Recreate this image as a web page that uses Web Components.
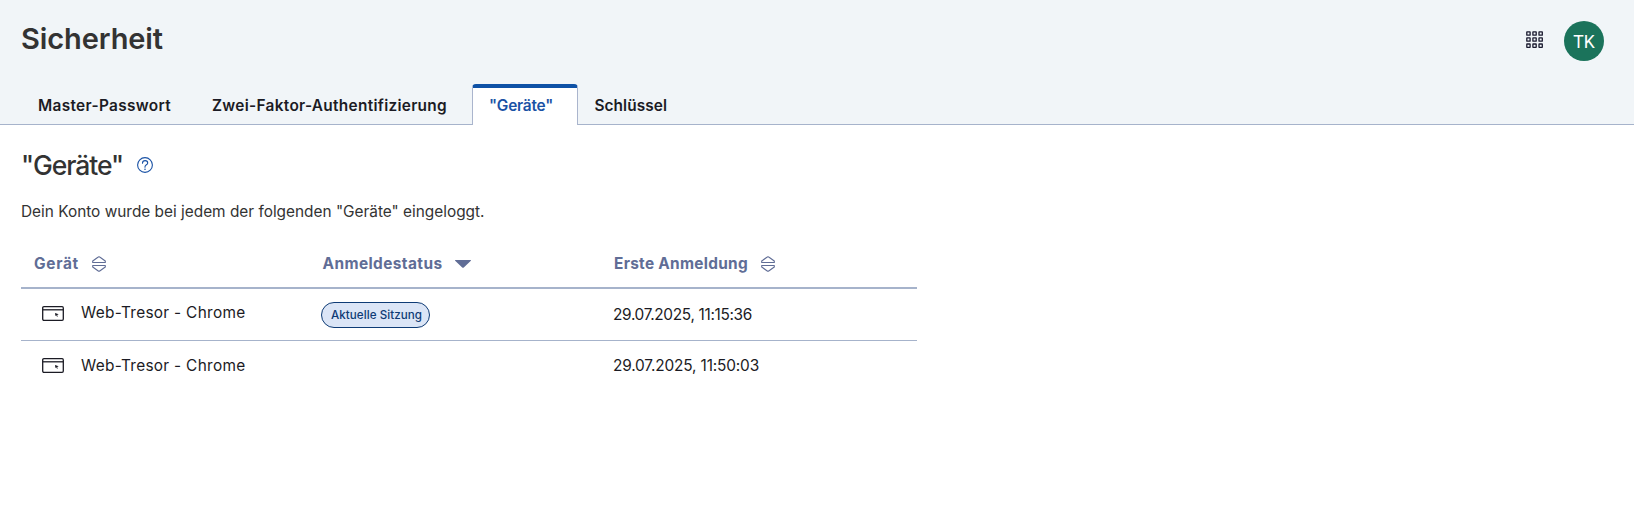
<!DOCTYPE html>
<html lang="de"><head><meta charset="utf-8"><title>Sicherheit</title>
<style>html,body{margin:0;background:#fff;font-family:Inter,"Liberation Sans",sans-serif;color:#1b1b24}</style></head>
<body><security-page></security-page>
<script>
// Single line of text, tracked so that it spans the given width.
class TextRun extends HTMLElement{
  connectedCallback(){
    const root=this.attachShadow({mode:'open'});
    root.innerHTML='<style>:host{display:block;white-space:nowrap;flex:none}span{display:inline-block}</style><span><slot></slot></span>';
    const w=+this.getAttribute('width'),s=root.querySelector('span');
    this.style.width=w+'px';
    s.style.letterSpacing=((w-s.getBoundingClientRect().width)/this.textContent.length)+'px';
  }
}
customElements.define('text-run',TextRun);

const icons={
 grid:['0 0 17 17',17,17,'<g fill="none" stroke="#1b1b30" stroke-width="1.3">'+[0,1,2].map(r=>[0,1,2].map(c=>`<rect x="${.8+c*6.1}" y="${.8+r*6.1}" width="3.3" height="3.3" rx=".2"/>`).join('')).join('')+'</g>'],
 help:['0 0 16 16',16,16,'<g fill="none" stroke="currentColor" stroke-width="1.1"><circle cx="8" cy="8" r="7.4"/><path d="M5.5 6.2C5.5 4.6 6.6 3.6 8.1 3.6S10.7 4.6 10.7 5.9C10.7 7.8 8 7.7 8 9.8V10.3" stroke-linecap="round"/></g><circle cx="8" cy="12.2" r=".8" fill="currentColor"/>'],
 sort:['0 0 14 16',14,16,'<path fill="none" stroke="currentColor" stroke-width="1.1" stroke-linejoin="round" d="M.7 6.5V5L6.3 1Q7 .4 7.7 1L13.3 5V6.5ZM.7 9.5H13.3V11L7.7 15Q7 15.6 6.3 15L.7 11Z"/>'],
 down:['0 0 16 8',16,8,'<path fill="currentColor" d="M.3 0H15.7Q16.3.5 15.6 1L8.8 7.4Q8 8.1 7.2 7.4L.4 1Q-.3.5.3 0Z"/>'],
 browser:['0 0 22 15',22,15,'<g fill="none" stroke="currentColor" stroke-width="1.3"><rect x=".7" y=".7" width="20.6" height="13.6" rx="1.2"/><path d="M.7 3.8H21.3"/></g><path fill="currentColor" d="M13 7L16.7 8.3L15.1 8.9L15.8 10.4L15 10.7L14.3 9.3L13.4 10.1Z"/>']
};
class UiIcon extends HTMLElement{
  connectedCallback(){
    const [box,w,h,art]=icons[this.getAttribute('name')];
    this.attachShadow({mode:'open'}).innerHTML=`<style>:host{display:block;flex:none;width:${w}px;height:${h}px}svg{display:block}</style><svg viewBox="${box}" width="${w}" height="${h}">${art}</svg>`;
  }
}
customElements.define('ui-icon',UiIcon);

class NavTab extends HTMLElement{
  connectedCallback(){
    this.attachShadow({mode:'open'}).innerHTML=`<style>
    :host{display:block;box-sizing:border-box;height:40px;padding:12px 17px 0;font-size:15.4px;line-height:20px;font-weight:600;color:#1b1b24}
    :host([active]){height:41px;margin-bottom:-1px;background:#fff;border:1px solid #aab5cd;border-top:4px solid #0f52a6;border-bottom:0;border-radius:4px 4px 0 0;padding:8px 16px 0;color:#1a52a5}
    </style><slot></slot>`;
  }
}
customElements.define('nav-tab',NavTab);

class UserAvatar extends HTMLElement{
  connectedCallback(){
    this.attachShadow({mode:'open'}).innerHTML='<style>:host{display:grid;place-items:center;width:40px;height:40px;border-radius:50%;background:#1b735b;color:#fff;font:17.5px/40px Roboto,sans-serif}span{margin-top:1px}</style><span><slot></slot></span>';
  }
}
customElements.define('user-avatar',UserAvatar);

class PageHeader extends HTMLElement{
  connectedCallback(){
    this.attachShadow({mode:'open'}).innerHTML=`<style>
    :host{display:block;box-sizing:border-box;height:125px;background:#f1f5f8;border-bottom:1px solid #a6b3cb}
    .top{display:flex;justify-content:space-between;height:84px;padding:0 30px 0 21px;box-sizing:border-box}
    h1{margin:20px 0 0;font-size:29px;line-height:38px;font-weight:600;color:#333}
    .tools{display:flex;align-items:center;gap:21px;height:40px;margin-top:21px}
    .tools ui-icon{margin-bottom:3px}
    nav{display:flex;padding-left:21px}
    .wide{width:277px}.mid{width:174px}.act{width:106px}.last{padding-left:16.5px}
    </style><div class="top"><h1><text-run width="142">Sicherheit</text-run></h1><div class="tools"><ui-icon name="grid"></ui-icon><user-avatar>TK</user-avatar></div></div>
    <nav><nav-tab class="mid"><text-run width="133">Master-Passwort</text-run></nav-tab><nav-tab class="wide"><text-run width="235">Zwei-Faktor-Authentifizierung</text-run></nav-tab><nav-tab active class="act"><text-run width="64">"Geräte"</text-run></nav-tab><nav-tab class="last"><text-run width="72.5">Schlüssel</text-run></nav-tab></nav>`;
  }
}
customElements.define('page-header',PageHeader);

class DeviceTable extends HTMLElement{
  connectedCallback(){
    const name='<span class="dev"><ui-icon name="browser"></ui-icon><text-run width="164.5">Web-Tresor - Chrome</text-run></span>';
    this.attachShadow({mode:'open'}).innerHTML=`<style>
    :host{display:block;width:896px;font-size:15.4px;line-height:20px}
    .row{display:grid;grid-template-columns:300px 292px 304px;align-items:center;box-sizing:border-box}
    .head{height:50px;border-bottom:2px solid #a6b3cb;color:#606d96;font-weight:700}
    .head>span{display:flex;align-items:center;gap:13px;padding:1px 0 0 13px}
    .head>span+span{padding-left:1.5px;gap:12px}.head>span+span+span{padding-left:1px;gap:13px}
    .r1{height:52px;border-bottom:1px solid #a6b3cb}.r2{height:49px}
    .dev{display:flex;align-items:center;gap:17px;padding-left:21px}
    .r1 .dev{margin-top:-3px}
    .pill{box-sizing:border-box;width:109px;height:26px;border:1px solid #0e3b75;border-radius:13px;background:#dbe5f6;color:#0e3b75;padding:0 9px;font-size:11.6px;line-height:24px;font-weight:500}
    </style>
    <div class="row head"><span><text-run width="45">Gerät</text-run><ui-icon name="sort"></ui-icon></span><span><text-run width="120">Anmeldestatus</text-run><ui-icon name="down"></ui-icon></span><span><text-run width="134">Erste Anmeldung</text-run><ui-icon name="sort"></ui-icon></span></div>
    <div class="row r1">${name}<div class="pill"><text-run width="91">Aktuelle Sitzung</text-run></div><text-run width="139">29.07.2025, 11:15:36</text-run></div>
    <div class="row r2">${name}<span></span><text-run width="146">29.07.2025, 11:50:03</text-run></div>`;
  }
}
customElements.define('device-table',DeviceTable);

class SecurityPage extends HTMLElement{
  connectedCallback(){
    this.attachShadow({mode:'open'}).innerHTML=`<style>
    :host{display:block;height:505px;overflow:hidden}
    main{padding:22px 21px}
    .title{display:flex;align-items:center;gap:14px;color:#1a52a5}
    h2{margin:0;font-size:26.5px;line-height:36px;font-weight:500;color:#333}
    p{margin:19px 0 17px;font-size:15.4px;line-height:20px;color:#333}
    </style><page-header></page-header><main><div class="title"><h2><text-run width="102">"Geräte"</text-run></h2><ui-icon name="help"></ui-icon></div><p><text-run width="463.5">Dein Konto wurde bei jedem der folgenden "Geräte" eingeloggt.</text-run></p><device-table></device-table></main>`;
  }
}
customElements.define('security-page',SecurityPage);
</script></body></html>
